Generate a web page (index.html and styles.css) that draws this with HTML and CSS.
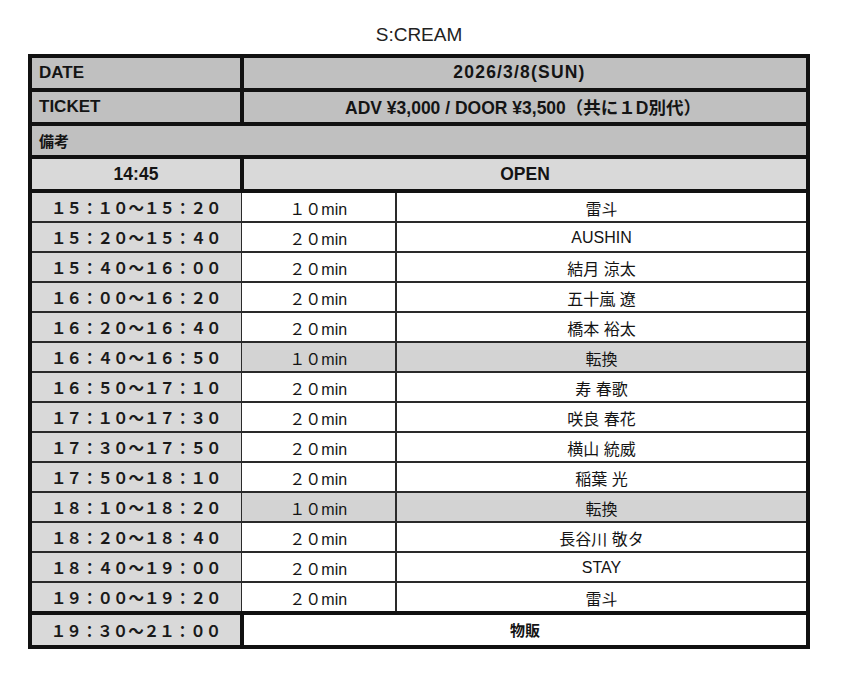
FILE: index.html
```html
<!DOCTYPE html>
<html lang="ja">
<head>
<meta charset="utf-8">
<title>S:CREAM</title>
<link rel="stylesheet" href="styles.css">
</head>
<body>
<h1 class="title">S:CREAM</h1>
<div class="sheet">
  <div class="row head">
    <div class="label">DATE</div>
    <div class="value big shifted">2026/3/8(SUN)</div>
  </div>
  <div class="row head">
    <div class="label">TICKET</div>
    <div class="value big ticket">ADV ¥3,000 / DOOR ¥3,500（共に１D別代）</div>
  </div>
  <div class="row head single">
    <div class="label note">備考</div>
  </div>
  <div class="row open">
    <div class="label center big">14:45</div>
    <div class="value big">OPEN</div>
  </div>
  <div class="schedule">
    <div class="slot"><div class="time">１５：１０～１５：２０</div><div class="dur">１０min</div><div class="act">雷斗</div></div>
    <div class="slot"><div class="time">１５：２０～１５：４０</div><div class="dur">２０min</div><div class="act">AUSHIN</div></div>
    <div class="slot"><div class="time">１５：４０～１６：００</div><div class="dur">２０min</div><div class="act">結月 涼太</div></div>
    <div class="slot"><div class="time">１６：００～１６：２０</div><div class="dur">２０min</div><div class="act">五十嵐 遼</div></div>
    <div class="slot"><div class="time">１６：２０～１６：４０</div><div class="dur">２０min</div><div class="act">橋本 裕太</div></div>
    <div class="slot change"><div class="time">１６：４０～１６：５０</div><div class="dur">１０min</div><div class="act">転換</div></div>
    <div class="slot"><div class="time">１６：５０～１７：１０</div><div class="dur">２０min</div><div class="act">寿 春歌</div></div>
    <div class="slot"><div class="time">１７：１０～１７：３０</div><div class="dur">２０min</div><div class="act">咲良 春花</div></div>
    <div class="slot"><div class="time">１７：３０～１７：５０</div><div class="dur">２０min</div><div class="act">横山 統威</div></div>
    <div class="slot"><div class="time">１７：５０～１８：１０</div><div class="dur">２０min</div><div class="act">稲葉 光</div></div>
    <div class="slot change"><div class="time">１８：１０～１８：２０</div><div class="dur">１０min</div><div class="act">転換</div></div>
    <div class="slot"><div class="time">１８：２０～１８：４０</div><div class="dur">２０min</div><div class="act">長谷川 敬タ</div></div>
    <div class="slot"><div class="time">１８：４０～１９：００</div><div class="dur">２０min</div><div class="act">STAY</div></div>
    <div class="slot"><div class="time">１９：００～１９：２０</div><div class="dur">２０min</div><div class="act">雷斗</div></div>
  </div>
  <div class="row merch">
    <div class="label center time-font">１９：３０～２１：００</div>
    <div class="value">物販</div>
  </div>
</div>
</body>
</html>
```

FILE: styles.css
```css
* { box-sizing: border-box; }

body {
  margin: 0;
  padding-top: 25px;
  background: #ffffff;
  color: #141414;
  font-family: "Liberation Sans", "Noto Sans CJK JP", sans-serif;
}

.title {
  width: 782px;
  margin: 0 0 9px 28px;
  font-size: 19px;
  font-weight: 400;
  line-height: 20px;
  text-align: center;
  color: #222;
}

.sheet {
  width: 782px;
  margin-left: 28px;
  border: 4px solid #111;
}

.row {
  display: grid;
  grid-template-columns: 212px 1fr;
  height: 33.75px;
  border-bottom: 4px solid #111;
}

.row > div {
  display: flex;
  align-items: center;
  font-size: 17px;
  font-weight: 700;
}

.row .label {
  border-right: 4px solid #111;
  padding-left: 7px;
}

.row .center {
  justify-content: center;
  padding-left: 0;
}

.row .value {
  justify-content: center;
}

.row .big {
  font-size: 17.5px;
}

.row .shifted {
  padding-right: 11px;
  letter-spacing: 1.2px;
}

.row .ticket {
  padding-right: 4px;
}

.head {
  background: #c0c0c0;
}

.head.single {
  grid-template-columns: 1fr;
}

.row .note {
  border-right: none;
  font-size: 15px;
}

.open {
  background: #d9d9d9;
}

.schedule {
  border-bottom: 4px solid #111;
}

.slot {
  display: grid;
  grid-template-columns: 209.5px 155.5px 1fr;
  height: 30px;
  border-bottom: 2px solid #2a2a2a;
}

.slot:last-child {
  height: 28px;
  border-bottom: none;
}

.slot > div {
  display: flex;
  align-items: center;
  justify-content: center;
  font-size: 16px;
  padding-top: 1px;
}

.time, .time-font {
  background: #d9d9d9;
  color: #1a1a1a;
}

.row .time-font {
  font-size: 15.5px;
  font-weight: 700;
}

.slot .time {
  font-size: 15.5px;
  font-weight: 700;
  border-right: 1.5px solid #2a2a2a;
  padding-top: 0;
}

.dur {
  border-right: 2px solid #2a2a2a;
  background: #fff;
}

.act {
  background: #fff;
}

.change .dur, .change .act {
  background: #d3d3d3;
}

.merch {
  border-bottom: none;
  height: 29.5px;
}

.merch .value {
  background: #fff;
  font-size: 15px;
}
```
